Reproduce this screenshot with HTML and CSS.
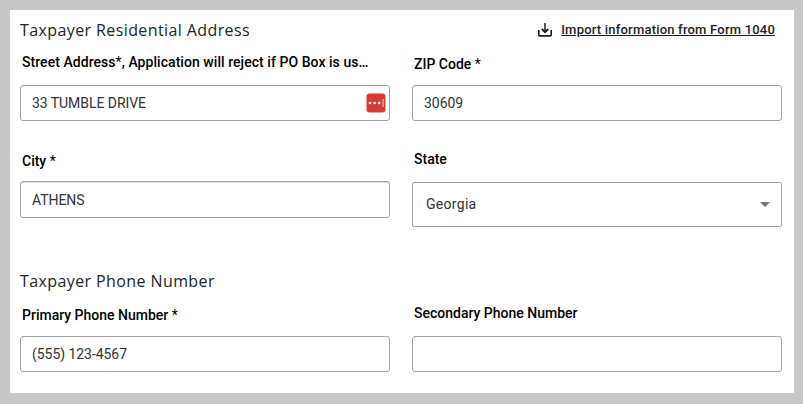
FILE: index.html
```
<!DOCTYPE html>
<html lang="en">

<head>
	<meta charset="utf-8">
	<title>Taxpayer Information</title>
	<link rel="stylesheet" href="styles.css">
</head>

<body>
	<form class="panel">
		<div class="section-head">
			<h2>Taxpayer Residential Address</h2>
			<a class="import-link" href="#">
				<svg width="14" height="14" viewBox="0 0 14 14" fill="none" stroke="#1d1d1f">
					<path d="M7 0v9" stroke-width="1.5"/>
					<path d="M3.8 6L7 9.2 10.2 6" stroke-width="1.9"/>
					<path d="M.8 7v5q0 .9.9.9h10.6q.9 0 .9-.9V7" stroke-width="1.6"/>
				</svg>
				<span>Import information from Form 1040</span>
			</a>
		</div>
		<div class="fields">
			<div class="field raised street">
				<label for="street">Street Address<span class="req">*</span>, Application will reject if PO Box is us…</label>
				<div class="input-wrap">
					<input type="text" id="street" value="33 TUMBLE DRIVE">
					<svg class="autofill" width="20" height="20" viewBox="0 0 20 20">
						<rect x=".5" y=".5" width="19" height="19" rx="3" fill="#d63b37"/>
						<circle cx="4" cy="10" r="1.3" fill="#fff"/>
						<circle cx="8.6" cy="10" r="1.3" fill="#fff"/>
						<circle cx="13.2" cy="10" r="1.3" fill="#fff"/>
						<rect x="16.5" y="6" width="1.2" height="8" fill="#f3b9b7"/>
					</svg>
				</div>
			</div>
			<div class="field">
				<label for="zip">ZIP Code <span class="req">*</span></label>
				<input type="text" id="zip" value="30609">
			</div>
			<div class="field city">
				<label for="city">City <span class="req">*</span></label>
				<input type="text" id="city" value="ATHENS">
			</div>
			<div class="field state">
				<label>State</label>
				<div class="select">
					<span>Georgia</span>
					<svg width="10" height="5" viewBox="0 0 10 5"><path d="M0 0h10L5 5z" fill="#757575"/></svg>
				</div>
			</div>
		</div>
		<div class="section-head phone">
			<h2>Taxpayer Phone Number</h2>
		</div>
		<div class="fields">
			<div class="field">
				<label for="primary">Primary Phone Number <span class="req">*</span></label>
				<input type="text" id="primary" value="(555) 123-4567">
			</div>
			<div class="field raised">
				<label for="secondary">Secondary Phone Number</label>
				<input type="text" id="secondary">
			</div>
		</div>
	</form>
</body>

</html>
```
FILE: styles.css
```
* {
	margin: 0px;
	padding: 0px;
	box-sizing: border-box;
}

body {
	padding: 10px 9px 11px 10px;
	background: #c8c8c8;
	font-family: Roboto, sans-serif;
}

.panel {
	height: 383px;
	padding: 10px 12px 0 10px;
	background: #fff;
}

.section-head {
	display: flex;
	justify-content: space-between;
	align-items: center;
	height: 20px;
}

.section-head.phone {
	margin-top: 44px;
}

.section-head h2 {
	font-family: "Open Sans", sans-serif;
	font-size: 16px;
	font-weight: 400;
	line-height: 20px;
	letter-spacing: 0.4px;
	color: #212529;
}

.import-link {
	display: flex;
	align-items: center;
	gap: 9px;
	margin-right: 7px;
	font-size: 13px;
	font-weight: 500;
	line-height: 20px;
	letter-spacing: 0.2px;
	color: #1d1d1f;
	text-decoration: none;
}

.import-link span {
	text-decoration: underline;
}

.fields {
	display: grid;
	grid-template-columns: 370px 370px;
	column-gap: 22px;
}

.field {
	padding-top: 14px;
}

.field label {
	display: block;
	margin: 0 0 11px 2px;
	font-size: 14px;
	font-weight: 500;
	line-height: 20px;
	color: #000;
	white-space: nowrap;
}

.field.street label {
	letter-spacing: 0.05px;
}

.field .req {
	font-weight: 400;
}

.field input {
	display: block;
	width: 100%;
	height: 36px;
	padding: 0 11px;
	border: 1px solid #a3a3a3;
	border-radius: 3px;
	outline: none;
	background: #fff;
	font-family: inherit;
	font-size: 14px;
	letter-spacing: -0.05px;
	color: #333;
}

.field.raised {
	padding-top: 12px;
}

.field.raised label {
	margin-bottom: 13px;
}

.field.city {
	padding-top: 30px;
}

.field.city label {
	margin-bottom: 10px;
}

.field.city input {
	height: 37px;
	box-shadow: inset 0 1px 0 #dcdce8;
}

.field.state {
	padding-top: 28px;
}

.field.state label {
	margin-bottom: 13px;
}

.select {
	display: flex;
	justify-content: space-between;
	align-items: center;
	height: 45px;
	padding: 0 11px 0 13px;
	border: 1px solid #a3a3a3;
	border-radius: 2px;
	font-size: 14px;
	letter-spacing: 0.3px;
	color: #333;
}

.select span {
	padding-bottom: 2px;
}

.input-wrap {
	position: relative;
}

.autofill {
	position: absolute;
	top: 8px;
	right: 4px;
}
```
